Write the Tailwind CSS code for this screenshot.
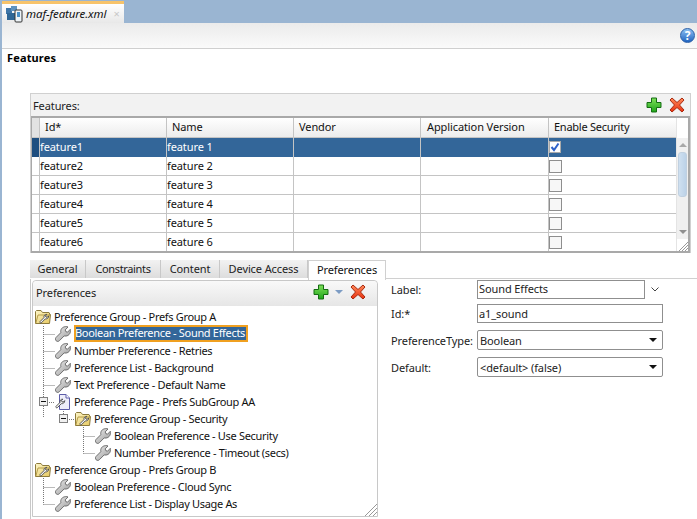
<!DOCTYPE html>
<html><head><meta charset="utf-8">
<script src="https://cdn.jsdelivr.net/npm/@tailwindcss/browser@4"></script>
</head>
<body class="m-0 bg-white overflow-hidden">
<svg width="0" height="0" class="absolute">
  <defs>
    <linearGradient id="wg" x1="0" y1="0" x2="1" y2="1"><stop offset="0" stop-color="#ececec"/><stop offset="1" stop-color="#9a9a9a"/></linearGradient>
    <linearGradient id="fg" x1="0" y1="0" x2="1" y2="1"><stop offset="0" stop-color="#fdf6c8"/><stop offset="1" stop-color="#e6c860"/></linearGradient>
    <linearGradient id="gg" x1="0" y1="0" x2="0" y2="1"><stop offset="0" stop-color="#7fe05a"/><stop offset="1" stop-color="#1fa51a"/></linearGradient>
    <linearGradient id="rg" x1="0" y1="0" x2="0" y2="1"><stop offset="0" stop-color="#ff8a5a"/><stop offset="1" stop-color="#e8300f"/></linearGradient>
    <symbol id="wrench" viewBox="0 0 16 16"><path d="M1 11.500 L5.800 6.700 C5.300 3.500 7 1 10.500 .6 C11.500 .5 12.300 .7 13 1 L10.200 3.900 L10.800 5.600 L12.500 6.200 L15.300 3.300 C16 6.800 14.200 9.700 11 10 C10.300 10.100 9.700 10 9.200 9.900 L4.400 14.700 C3.400 15.700 2 15.600 1.200 14.800 C.3 13.900 .2 12.400 1 11.500 Z" fill="url(#wg)" stroke="#6e6e6e" stroke-width="1"/></symbol>
    <symbol id="folder" viewBox="0 0 16 16"><path d="M.5 14.500 V2.500 L1.500 1.500 H6 L7.500 3.500 H14 L14.500 4 V5.500 H15.500 L14.500 14.500 Z" fill="url(#fg)" stroke="#8c7a3c"/><path d="M.8 14.300 L3 6 H15" fill="none" stroke="#b59c48"/><path d="M5 12.600 L9 8.600 C8.600 6.800 9.700 5.400 11.800 5.300 L10.400 6.900 L11 8 L12.200 8.300 L13.700 6.800 C13.800 8.800 12.200 10.200 10.300 9.900 L6.300 13.900 C5.600 14.400 4.400 13.300 5 12.600 Z" fill="#f4f4f4" stroke="#444" stroke-width=".9"/></symbol>
    <symbol id="page" viewBox="0 0 16 16"><path d="M4.500 .5 H11 L14.500 4 V15.500 H4.500 Z" fill="#eeeef9" stroke="#5d5da8"/><path d="M11 .5 V4 H14.500" fill="#fff" stroke="#5d5da8"/><path d="M1 12.400 L5 8.400 C4.600 6.600 5.700 5.200 7.800 5.100 L6.400 6.700 L7 7.800 L8.200 8.100 L9.700 6.600 C9.800 8.600 8.200 10 6.300 9.700 L2.300 13.700 C1.600 14.400 .4 13.100 1 12.400 Z" fill="#f2f2f2" stroke="#444" stroke-width=".9"/></symbol>
    <symbol id="plus" viewBox="0 0 16 16"><path d="M5.500 1 H10.500 V5.500 H15 V10.500 H10.500 V15 H5.500 V10.500 H1 V5.500 H5.500 Z" fill="url(#gg)" stroke="#146d12"/></symbol>
    <symbol id="cross" viewBox="0 0 16 16"><path d="M1 3 L3 1 L8 5.500 L13 1 L15 3 L10.500 8 L15 13 L13 15 L8 10.500 L3 15 L1 13 L5.500 8 Z" fill="url(#rg)" stroke="#a82a10"/></symbol>
    <symbol id="minus" viewBox="0 0 9 9"><rect x=".5" y=".5" width="8" height="8" fill="#f0f0f0" stroke="#808080"/><path d="M2 4.500 H7" stroke="#111"/></symbol>
  </defs>
</svg>

<div class="w-[697px] h-[519px] overflow-hidden flex flex-col border-l-[2px] border-[#9ab5d2] text-[11px] leading-[17px] text-[#111] tracking-[-0.1px] [font-family:'Noto_Sans',sans-serif]">
  <div class="h-[23px] shrink-0 bg-[#9ab5d2] flex items-end -ml-[1px]">
    <div class="w-[123px] h-[22px] border-t-[3px] border-[#f7c36a] bg-gradient-to-b from-white to-[#e8e8e8] flex items-center pl-[4px] gap-[2px]">
      <svg class="w-[19px] h-[18px] shrink-0" viewBox="0 0 19 18"><rect x="1" y="3" width="6" height="6" fill="#3f76a8"/><rect x="6" y="1" width="6" height="5" fill="#5f93c0"/><rect x="2" y="8" width="9" height="7" fill="#2f6696"/><rect x="10" y="5" width="7" height="12" rx="1" fill="#eef4f8" stroke="#333"/><rect x="12" y="7" width="3" height="5" fill="#4a90c8"/></svg>
      <span class="italic text-[11.5px] tracking-[-0.1px] text-[#111] whitespace-nowrap">maf-feature.xml</span>
      <span class="ml-[5px] text-[#c8c8c8] text-[11px]">×</span>
    </div>
  </div>
  <div class="h-[26px] shrink-0 bg-gradient-to-b from-[#ebebeb] to-[#fafafa] border-b-[1px] border-[#cfcfcf] flex items-center justify-end pr-[2px]">
    <div class="w-[15px] h-[15px] rounded-full bg-gradient-to-b from-[#8cc0f2] to-[#1f64c0] border border-[#2a5fa8] flex items-center justify-center text-white text-[12px] font-bold leading-none">?</div>
  </div>
  <div class="flex-1 pl-[5px] min-h-0">
    <div class="h-[17px] font-bold text-[#000] tracking-[0.15px]">Features</div>
    <div class="mt-[27px] ml-[23px] w-[661px] border border-[#d0d0d0] border-b-0 bg-[#f2f2f2]">
      <div class="h-[22px] flex items-center justify-between pl-[2px] pr-[5px] text-[#222]">
        <span>Features:</span>
        <span class="flex gap-[7px]"><svg class="w-[16px] h-[16px]"><use href="#plus"/></svg><svg class="w-[16px] h-[16px]"><use href="#cross"/></svg></span>
      </div>
      <div class="relative border-[2px] border-[#a9a9a9] border-l-[1px] bg-white h-[137px] flex overflow-hidden">
        <div class="w-[644px] shrink-0">
          <div class="grid grid-cols-[8px_127px_127px_127px_128px_127px] h-[20px] bg-gradient-to-b from-white to-[#ececec] border-b border-[#c4c4c4]">
            <div class="bg-[#e2e2e2] border-r border-[#c4c4c4]"></div>
            <div class="border-r border-[#c4c4c4] pl-[5px] leading-[18px]">Id*</div>
            <div class="border-r border-[#c4c4c4] pl-[5px] leading-[18px]">Name</div>
            <div class="border-r border-[#c4c4c4] pl-[5px] leading-[18px]">Vendor</div>
            <div class="border-r border-[#c4c4c4] pl-[6px] leading-[18px]">Application Version</div>
            <div class="pl-[5px] leading-[18px] tracking-[-0.25px]">Enable Security</div>
          </div>
          <div class="grid grid-cols-[8px_127px_127px_127px_128px_127px] h-[19px] bg-[#336699] text-white leading-[18px]">
            <div class="border-r border-[#c4c4c4] bg-[#1f4f80]"></div><div class="border-r border-[#c4c4c4]">feature1</div><div class="border-r border-[#c4c4c4]">feature 1</div><div class="border-r border-[#c4c4c4]"></div><div class="border-r border-[#c4c4c4]"></div>
            <div class="pt-[3px]"><div class="w-[12px] h-[12px] bg-white border border-[#aaa] flex items-center justify-center"><svg class="w-[10px] h-[10px]" viewBox="0 0 10 10"><path d="M1.500 5 L4 8 L8.500 1.500" fill="none" stroke="#2f62c8" stroke-width="2"/></svg></div></div>
          </div>
          <div class="grid grid-cols-[8px_127px_127px_127px_128px_127px] h-[19px] border-b border-[#c4c4c4] leading-[18px]">
            <div class="border-r border-[#c4c4c4]"></div><div class="border-r border-[#c4c4c4]">feature2</div><div class="border-r border-[#c4c4c4]">feature 2</div><div class="border-r border-[#c4c4c4]"></div><div class="border-r border-[#c4c4c4]"></div>
            <div class="pt-[3px]"><div class="w-[13px] h-[13px] bg-[#f7f7f7] border border-[#8e8e8e]"></div></div>
          </div>
          <div class="grid grid-cols-[8px_127px_127px_127px_128px_127px] h-[19px] border-b border-[#c4c4c4] leading-[18px]">
            <div class="border-r border-[#c4c4c4]"></div><div class="border-r border-[#c4c4c4]">feature3</div><div class="border-r border-[#c4c4c4]">feature 3</div><div class="border-r border-[#c4c4c4]"></div><div class="border-r border-[#c4c4c4]"></div>
            <div class="pt-[3px]"><div class="w-[13px] h-[13px] bg-[#f7f7f7] border border-[#8e8e8e]"></div></div>
          </div>
          <div class="grid grid-cols-[8px_127px_127px_127px_128px_127px] h-[19px] border-b border-[#c4c4c4] leading-[18px]">
            <div class="border-r border-[#c4c4c4]"></div><div class="border-r border-[#c4c4c4]">feature4</div><div class="border-r border-[#c4c4c4]">feature 4</div><div class="border-r border-[#c4c4c4]"></div><div class="border-r border-[#c4c4c4]"></div>
            <div class="pt-[3px]"><div class="w-[13px] h-[13px] bg-[#f7f7f7] border border-[#8e8e8e]"></div></div>
          </div>
          <div class="grid grid-cols-[8px_127px_127px_127px_128px_127px] h-[19px] border-b border-[#c4c4c4] leading-[18px]">
            <div class="border-r border-[#c4c4c4]"></div><div class="border-r border-[#c4c4c4]">feature5</div><div class="border-r border-[#c4c4c4]">feature 5</div><div class="border-r border-[#c4c4c4]"></div><div class="border-r border-[#c4c4c4]"></div>
            <div class="pt-[3px]"><div class="w-[13px] h-[13px] bg-[#f7f7f7] border border-[#8e8e8e]"></div></div>
          </div>
          <div class="grid grid-cols-[8px_127px_127px_127px_128px_127px] h-[19px] leading-[18px]">
            <div class="border-r border-[#c4c4c4]"></div><div class="border-r border-[#c4c4c4]">feature6</div><div class="border-r border-[#c4c4c4]">feature 6</div><div class="border-r border-[#c4c4c4]"></div><div class="border-r border-[#c4c4c4]"></div>
            <div class="pt-[3px]"><div class="w-[13px] h-[13px] bg-[#f7f7f7] border border-[#8e8e8e]"></div></div>
          </div>
        </div>
        <div class="flex-1 flex flex-col border-l border-[#e4e4e4]">
          <div class="h-[20px] shrink-0 bg-white"></div>
          <div class="h-[101px] shrink-0 flex flex-col items-center bg-[#f0f0f0] px-[1px]">
            <div class="h-[14px] shrink-0 flex items-center"><div class="w-0 h-0 border-x-[4px] border-x-transparent border-b-[4px] border-b-[#a8a8a8]"></div></div>
            <div class="w-full h-[45px] shrink-0 rounded-[3px] bg-gradient-to-r from-[#cfe0f0] to-[#bcd2e8] border border-[#c0d0e0]"></div>
            <div class="flex-1"></div>
            <div class="h-[14px] shrink-0 flex items-center"><div class="w-0 h-0 border-x-[4px] border-x-transparent border-t-[4px] border-t-[#909090]"></div></div>
          </div>
          <div class="flex-1 bg-white"></div>
        </div>
        <svg class="absolute right-0 bottom-0 w-[9px] h-[9px]" viewBox="0 0 9 9" stroke="#999"><path d="M0 9 L9 0 M3 9 L9 3 M6 9 L9 6"/></svg>
      </div>
    </div>

    <div class="mt-[7px] ml-[23px] flex h-[19px] items-start">
      <div class="w-[56px] h-[18px] pb-[2px] bg-gradient-to-b from-[#f2f2f2] to-[#dddddd] border-r border-[#c8c8c8] flex items-center justify-center text-[#222]">General</div>
      <div class="w-[75px] h-[18px] pb-[2px] bg-gradient-to-b from-[#f2f2f2] to-[#dddddd] border-r border-[#c8c8c8] flex items-center justify-center text-[#222] tracking-[-0.35px]">Constraints</div>
      <div class="w-[59px] h-[18px] pb-[2px] bg-gradient-to-b from-[#f2f2f2] to-[#dddddd] border-r border-[#c8c8c8] flex items-center justify-center text-[#222]">Content</div>
      <div class="w-[88px] h-[18px] pb-[2px] bg-gradient-to-b from-[#f2f2f2] to-[#dddddd] border-r border-[#c8c8c8] flex items-center justify-center text-[#222]">Device Access</div>
      <div class="w-[78px] h-[20px] bg-white border border-b-0 border-[#d0d0d0] flex items-center justify-center text-[#111] relative z-10 pb-[3px]">Preferences</div>
      <div class="flex-1 h-[19px] border-b border-[#d0d0d0]"></div>
    </div>

    <div class="ml-[23px] border-l border-[#c8c8c8] pl-[1px] pt-[1px] flex h-[241px]">
      <div class="relative w-[346px] h-[237px] border border-[#c8c8c8] rounded-t-[4px] flex flex-col">
        <div class="h-[25px] shrink-0 bg-gradient-to-b from-[#f9f9f9] to-[#e6e6e6] rounded-t-[4px] flex items-center justify-between pl-[3px] pr-[11px] pb-[3px] text-[#222]">
          <span>Preferences</span>
          <span class="flex items-center gap-[6px]"><svg class="w-[16px] h-[16px]"><use href="#plus"/></svg><span class="w-0 h-0 border-x-[4px] border-x-transparent border-t-[4px] border-t-[#7d9cc4]"></span><svg class="w-[16px] h-[16px] ml-[1px]"><use href="#cross"/></svg></span>
        </div>
        <div class="relative flex-1 pt-[2px] text-[#111] tracking-[-0.32px]">
          <svg class="absolute left-0 -top-[1px] w-[345px] h-[210px] pointer-events-none" viewBox="0 0 345 210" fill="none" stroke="#777" stroke-dasharray="1 1">
            <path d="M10.500 21 V112 M10.500 29.500 H22 M10.500 46.500 H22 M10.500 63.500 H22 M10.500 80.500 H22 M14 97.500 H22 M30.500 106 V110 M34 114.500 H42 M50.500 122 V148.500 M50.500 131.500 H62 M50.500 148.500 H62 M10.500 173 V199.500 M10.500 182.500 H22 M10.500 199.500 H22"/>
          </svg>
          <div class="relative h-[17px] flex items-center pl-[2px] gap-[3px]"><svg class="w-[16px] h-[16px] shrink-0"><use href="#folder"/></svg><span>Preference Group - Prefs Group A</span></div>
          <div class="relative h-[17px] flex items-center pl-[22px] gap-[3px]"><svg class="w-[16px] h-[16px] shrink-0"><use href="#wrench"/></svg><span class="bg-[#336699] text-white outline-[2px] outline-solid -outline-offset-2 outline-[#f0a020] h-[17px] leading-[16px] pl-[1px] pr-[3px]">Boolean Preference - Sound Effects</span></div>
          <div class="relative h-[17px] flex items-center pl-[22px] gap-[3px]"><svg class="w-[16px] h-[16px] shrink-0"><use href="#wrench"/></svg><span>Number Preference - Retries</span></div>
          <div class="relative h-[17px] flex items-center pl-[22px] gap-[3px]"><svg class="w-[16px] h-[16px] shrink-0"><use href="#wrench"/></svg><span>Preference List - Background</span></div>
          <div class="relative h-[17px] flex items-center pl-[22px] gap-[3px]"><svg class="w-[16px] h-[16px] shrink-0"><use href="#wrench"/></svg><span>Text Preference - Default Name</span></div>
          <div class="relative h-[17px] flex items-center pl-[6px]"><svg class="w-[9px] h-[9px] shrink-0"><use href="#minus"/></svg><svg class="w-[16px] h-[16px] shrink-0 ml-[7px]"><use href="#page"/></svg><span class="ml-[3px]">Preference Page - Prefs SubGroup AA</span></div>
          <div class="relative h-[17px] flex items-center pl-[26px]"><svg class="w-[9px] h-[9px] shrink-0"><use href="#minus"/></svg><svg class="w-[16px] h-[16px] shrink-0 ml-[7px]"><use href="#folder"/></svg><span class="ml-[3px]">Preference Group - Security</span></div>
          <div class="relative h-[17px] flex items-center pl-[62px] gap-[3px]"><svg class="w-[16px] h-[16px] shrink-0"><use href="#wrench"/></svg><span>Boolean Preference - Use Security</span></div>
          <div class="relative h-[17px] flex items-center pl-[62px] gap-[3px]"><svg class="w-[16px] h-[16px] shrink-0"><use href="#wrench"/></svg><span>Number Preference - Timeout (secs)</span></div>
          <div class="relative h-[17px] flex items-center pl-[2px] gap-[3px]"><svg class="w-[16px] h-[16px] shrink-0"><use href="#folder"/></svg><span>Preference Group - Prefs Group B</span></div>
          <div class="relative h-[17px] flex items-center pl-[22px] gap-[3px]"><svg class="w-[16px] h-[16px] shrink-0"><use href="#wrench"/></svg><span>Boolean Preference - Cloud Sync</span></div>
          <div class="relative h-[17px] flex items-center pl-[22px] gap-[3px]"><svg class="w-[16px] h-[16px] shrink-0"><use href="#wrench"/></svg><span>Preference List - Display Usage As</span></div>
          <svg class="absolute right-0 bottom-0 w-[12px] h-[12px]" viewBox="0 0 12 12" stroke="#999"><path d="M0 12 L12 0 M4 12 L12 4 M8 12 L12 8"/></svg>
        </div>
      </div>
      <div class="ml-[13px] w-[273px] -mt-[1px] text-[#222]">
        <div class="grid grid-cols-[86px_168px_1fr] h-[20px] items-center">
          <span>Label:</span>
          <div class="h-[19px] border border-[#8f8f8f] pl-[1px] leading-[15px]">Sound Effects</div>
          <svg class="w-[8px] h-[5px] ml-[6px]" viewBox="0 0 8 5" fill="none" stroke="#444"><path d="M.5 .5 L4 4 L7.500 .5"/></svg>
        </div>
        <div class="grid grid-cols-[86px_186px] h-[19px] mt-[5px] items-center">
          <span>Id:*</span>
          <div class="h-[19px] border border-[#8f8f8f] pl-[1px] leading-[17px]">a1_sound</div>
        </div>
        <div class="grid grid-cols-[86px_186px] h-[20px] mt-[7px] items-center">
          <span>PreferenceType:</span>
          <div class="h-[20px] border border-[#8f8f8f] rounded-[2px] pl-[2px] flex items-center justify-between pr-[5px]"><span>Boolean</span><span class="w-0 h-0 border-x-[4px] border-x-transparent border-t-[4px] border-t-[#111]"></span></div>
        </div>
        <div class="grid grid-cols-[86px_186px] h-[20px] mt-[7px] items-center">
          <span>Default:</span>
          <div class="h-[20px] border border-[#8f8f8f] rounded-[2px] pl-[2px] flex items-center justify-between pr-[5px]"><span>&lt;default&gt; (false)</span><span class="w-0 h-0 border-x-[4px] border-x-transparent border-t-[4px] border-t-[#111]"></span></div>
        </div>
      </div>
    </div>
  </div>
</div>
</body></html>
